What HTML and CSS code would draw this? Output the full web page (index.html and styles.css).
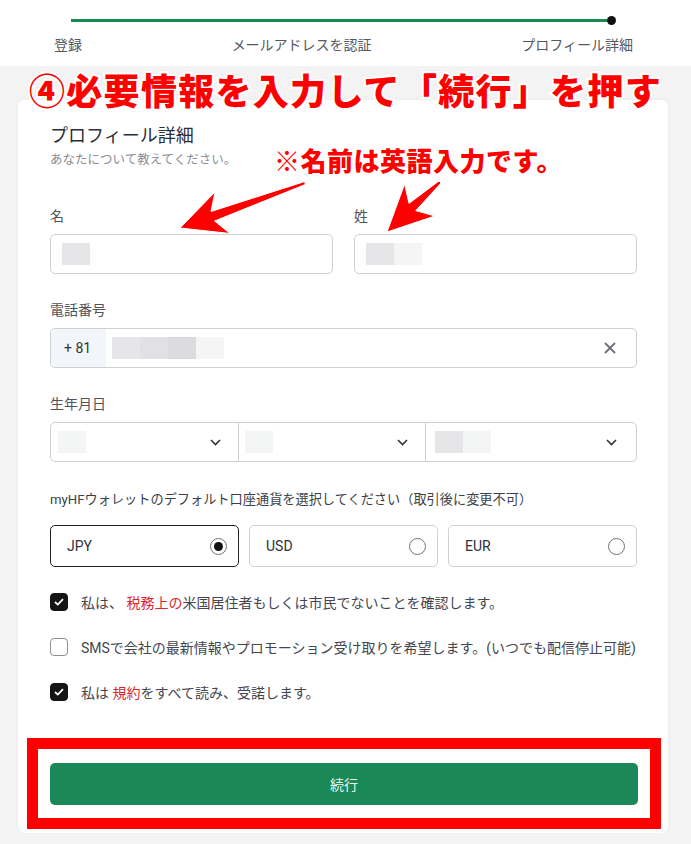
FILE: index.html
```html
<!DOCTYPE html>
<html lang="ja">
<head>
    <meta charset="UTF-8">
    <meta name="viewport" content="width=device-width, initial-scale=1.0">
    <title>プロフィール詳細</title>
    <link rel="stylesheet" href="styles.css">
</head>
<body>

    <div class="steps">
        <div class="track">
            <div class="track-line"></div>
            <div class="track-dot"></div>
        </div>
        <div class="step-labels">
            <span>登録</span>
            <span>メールアドレスを認証</span>
            <span>プロフィール詳細</span>
        </div>
    </div>

    <div class="card">
        <h2 class="card-title">プロフィール詳細</h2>
        <p class="card-sub">あなたについて教えてください。</p>

        <div class="name-row">
            <div class="field">
                <label>名</label>
                <div class="input">
                    <span class="mask mask-mid"></span>
                </div>
            </div>
            <div class="field">
                <label>姓</label>
                <div class="input">
                    <span class="mask mask-mid"></span>
                    <span class="mask mask-light"></span>
                </div>
            </div>
        </div>

        <div class="field gap-26">
            <label>電話番号</label>
            <div class="input phone">
                <span class="prefix">+ 81</span>
                <div class="phone-value">
                    <span class="mask mask-mid"></span>
                    <span class="mask mask-mid2"></span>
                    <span class="mask mask-dark"></span>
                    <span class="mask mask-light"></span>
                </div>
                <svg class="clear" width="12" height="12" viewBox="0 0 12 12">
                    <path d="M1.5 1.5 L10.5 10.5 M10.5 1.5 L1.5 10.5" stroke="#6b6f78" stroke-width="1.8" stroke-linecap="round"/>
                </svg>
            </div>
        </div>

        <div class="field gap-26">
            <label>生年月日</label>
            <div class="date">
                <div class="date-part">
                    <span class="mask mask-pale"></span>
                    <svg class="chev" width="11" height="7" viewBox="0 0 11 7"><path d="M1 1 L5.5 5.5 L10 1" fill="none" stroke="#333" stroke-width="1.6"/></svg>
                </div>
                <div class="date-part">
                    <span class="mask mask-pale"></span>
                    <svg class="chev" width="11" height="7" viewBox="0 0 11 7"><path d="M1 1 L5.5 5.5 L10 1" fill="none" stroke="#333" stroke-width="1.6"/></svg>
                </div>
                <div class="date-part">
                    <span class="masks">
                        <span class="mask mask-mid"></span>
                        <span class="mask mask-pale"></span>
                    </span>
                    <svg class="chev" width="11" height="7" viewBox="0 0 11 7"><path d="M1 1 L5.5 5.5 L10 1" fill="none" stroke="#333" stroke-width="1.6"/></svg>
                </div>
            </div>
        </div>

        <p class="currency-label">myHFウォレットのデフォルト口座通貨を選択してください（取引後に変更不可）</p>
        <div class="currencies">
            <div class="option selected"><span>JPY</span><span class="radio"></span></div>
            <div class="option"><span>USD</span><span class="radio"></span></div>
            <div class="option"><span>EUR</span><span class="radio"></span></div>
        </div>

        <div class="check-row">
            <span class="box checked"><svg width="10" height="8" viewBox="0 0 10 8"><path d="M1 4 L3.8 6.6 L9 1.2" fill="none" stroke="#fff" stroke-width="1.8"/></svg></span>
            <span>私は、 <em>税務上の</em>米国居住者もしくは市民でないことを確認します。</span>
        </div>
        <div class="check-row">
            <span class="box"></span>
            <span>SMSで会社の最新情報やプロモーション受け取りを希望します。(いつでも配信停止可能)</span>
        </div>
        <div class="check-row">
            <span class="box checked"><svg width="10" height="8" viewBox="0 0 10 8"><path d="M1 4 L3.8 6.6 L9 1.2" fill="none" stroke="#fff" stroke-width="1.8"/></svg></span>
            <span>私は <em>規約</em>をすべて読み、受諾します。</span>
        </div>

        <div class="highlight">
            <button class="submit">続行</button>
        </div>
    </div>

    <!-- annotations drawn over the screenshot -->
    <div class="note note-title">④必要情報を入力して「続行」を押す</div>
    <div class="note note-name">※名前は英語入力です。</div>
    <svg class="arrows" width="691" height="844" viewBox="0 0 691 844">
        <polygon points="180,228 215,192 211,211.5 304.5,181.6 305.5,184.4 214.6,221 230,233.5" fill="#ff0000" stroke="#fff" stroke-width="1" stroke-linejoin="round"/>
        <polygon points="387,232 404.6,184 409,203.4 439,180.9 441,183.1 415.8,210.6 434.8,216" fill="#ff0000" stroke="#fff" stroke-width="1" stroke-linejoin="round"/>
    </svg>

</body>
</html>
```

FILE: styles.css
```css
body {
    margin: 0;
    background: #f3f3f3;
    font-family: Roboto, "Noto Sans CJK JP", sans-serif;
    color: #4a4d55;
    position: relative;
}

/* stepper */
.steps {
    background: #fff;
    padding: 16px 0 11px;
}

.track {
    display: flex;
    align-items: center;
    height: 9px;
    margin: 0 75px 0 71px;
}

.track-line {
    flex: 1;
    height: 3px;
    background: #1a8a52;
}

.track-dot {
    width: 9px;
    height: 9px;
    border-radius: 50%;
    background: #111;
}

.step-labels {
    display: flex;
    justify-content: space-between;
    margin: 10px 58px 0 54px;
    font-size: 14px;
    line-height: 20px;
    color: #55585f;
}

/* card */
.card {
    background: #fff;
    margin: 34px 23px 0 18px;
    padding: 24px 31px 4px 32px;
    border-radius: 6px;
    box-shadow: 0 0 4px rgba(0, 0, 0, 0.04);
}

.card-title {
    margin: 0;
    font-size: 18px;
    line-height: 24px;
    font-weight: 400;
    color: #2b2e36;
}

.card-sub {
    margin: 4px 0 0;
    font-size: 12.5px;
    line-height: 16px;
    color: #8a8d94;
}

.name-row {
    display: grid;
    grid-template-columns: 1fr 1fr;
    gap: 21px;
    margin-top: 38px;
}

.field label {
    display: block;
    font-size: 14px;
    line-height: 20px;
    color: #50535b;
}

.gap-26 {
    margin-top: 26px;
}

.input {
    display: flex;
    align-items: center;
    height: 40px;
    margin-top: 8px;
    padding: 0 11px;
    border: 1px solid #cfd0d3;
    border-radius: 5px;
    box-sizing: border-box;
}

.mask {
    display: inline-block;
    width: 28px;
    height: 22px;
}

.mask-mid { background: #e6e6e8; }
.mask-mid2 { background: #e1e1e4; }
.mask-dark { background: #dcdcdf; }
.mask-light { background: #f5f5f6; }
.mask-pale { background: #f4f5f5; }

.masks {
    display: flex;
}

.phone {
    padding: 0;
    overflow: hidden;
}

.prefix {
    align-self: stretch;
    display: flex;
    align-items: center;
    width: 55px;
    padding-left: 13px;
    box-sizing: border-box;
    background: #f2f5f9;
    font-size: 14px;
    color: #333;
}

.phone-value {
    display: flex;
    flex: 1;
    margin-left: 6px;
}

.clear {
    margin-right: 20px;
}

.date {
    display: grid;
    grid-template-columns: 187px 187px 1fr;
    height: 40px;
    margin-top: 8px;
    border: 1px solid #cfd0d3;
    border-radius: 5px;
    box-sizing: border-box;
}

.date-part {
    display: flex;
    align-items: center;
    justify-content: space-between;
    padding: 0 17px 0 7px;
}

.date-part + .date-part {
    border-left: 1px solid #cfd0d3;
    padding-left: 6px;
}

.date-part:last-child {
    padding-left: 9px;
    padding-right: 19px;
}

/* currency */
.currency-label {
    margin: 28px 0 0;
    font-size: 13.2px;
    line-height: 20px;
    color: #3c3f47;
}

.currencies {
    display: grid;
    grid-template-columns: repeat(3, 1fr);
    gap: 10px;
    margin-top: 15px;
}

.option {
    display: flex;
    align-items: center;
    justify-content: space-between;
    height: 42px;
    padding: 0 11px 0 16px;
    border: 1px solid #cfd0d3;
    border-radius: 5px;
    box-sizing: border-box;
    font-size: 14px;
    color: #2f323a;
}

.option.selected {
    border-color: #222;
}

.radio {
    width: 17px;
    height: 17px;
    border: 1px solid #6f727a;
    border-radius: 50%;
    box-sizing: border-box;
    display: flex;
    align-items: center;
    justify-content: center;
}

.selected .radio::after {
    content: "";
    width: 9px;
    height: 9px;
    border-radius: 50%;
    background: #111;
}

/* checkboxes */
.check-row {
    display: flex;
    align-items: center;
    gap: 13px;
    height: 20px;
    margin-top: 25px;
    font-size: 14px;
    color: #44474f;
}

.check-row em {
    font-style: normal;
    color: #d9262e;
}

.box {
    flex: none;
    width: 18px;
    height: 18px;
    border: 1px solid #8d9097;
    border-radius: 4px;
    box-sizing: border-box;
    display: flex;
    align-items: center;
    justify-content: center;
}

.box.checked {
    background: #141414;
    border-color: #141414;
}

/* button in the red frame */
.highlight {
    margin: 36px -24px 0 -23px;
    padding: 14px 12px 13px;
    border: 11px solid #ff0000;
}

.submit {
    display: block;
    width: 100%;
    height: 42px;
    border: none;
    border-radius: 5px;
    background: #1a8857;
    color: #eef6f1;
    font-family: inherit;
    font-size: 14px;
}

/* annotations */
.note {
    position: absolute;
    color: #ff0000;
    font-family: "Noto Sans CJK JP", sans-serif;
    font-weight: 900;
    white-space: nowrap;
    -webkit-text-stroke: 4px #fff;
    paint-order: stroke fill;
}

.note-title {
    top: 69px;
    left: 29px;
    font-size: 36px;
    line-height: 40px;
    letter-spacing: 1.3px;
}

.note-name {
    top: 145px;
    left: 274px;
    font-size: 26px;
    line-height: 30px;
    letter-spacing: 0.5px;
}

.arrows {
    position: absolute;
    top: 0;
    left: 0;
    pointer-events: none;
}
```
